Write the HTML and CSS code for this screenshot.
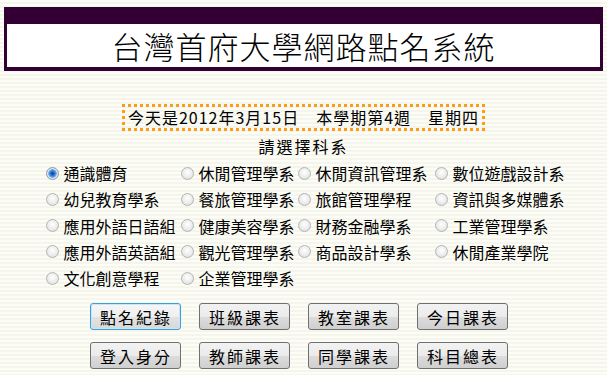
FILE: index.html
```html
<!DOCTYPE html>
<html lang="zh-Hant">
<head>
  <meta charset="UTF-8" />
  <title>台灣首府大學網路點名系統</title>
  <link rel="stylesheet" href="styles.css">
</head>
<body>

  <div class="header">
    <h1>台灣首府大學網路點名系統</h1>
  </div>

  <div class="today">
    <span class="today-box">今天是2012年3月15日　本學期第4週　星期四</span>
  </div>

  <p class="prompt">請選擇科系</p>

  <form class="depts">
    <label><input type="radio" name="dept" checked>通識體育</label>
    <label><input type="radio" name="dept">休閒管理學系</label>
    <label><input type="radio" name="dept">休閒資訊管理系</label>
    <label><input type="radio" name="dept">數位遊戲設計系</label>

    <label><input type="radio" name="dept">幼兒教育學系</label>
    <label><input type="radio" name="dept">餐旅管理學系</label>
    <label><input type="radio" name="dept">旅館管理學程</label>
    <label><input type="radio" name="dept">資訊與多媒體系</label>

    <label><input type="radio" name="dept">應用外語日語組</label>
    <label><input type="radio" name="dept">健康美容學系</label>
    <label><input type="radio" name="dept">財務金融學系</label>
    <label><input type="radio" name="dept">工業管理學系</label>

    <label><input type="radio" name="dept">應用外語英語組</label>
    <label><input type="radio" name="dept">觀光管理學系</label>
    <label><input type="radio" name="dept">商品設計學系</label>
    <label><input type="radio" name="dept">休閒產業學院</label>

    <label><input type="radio" name="dept">文化創意學程</label>
    <label><input type="radio" name="dept">企業管理學系</label>
  </form>

  <div class="buttons">
    <button class="default">點名紀錄</button>
    <button>班級課表</button>
    <button>教室課表</button>
    <button>今日課表</button>
    <button>登入身分</button>
    <button>教師課表</button>
    <button>同學課表</button>
    <button>科目總表</button>
  </div>

</body>
</html>
```

FILE: styles.css
```css
body {
  margin: 7px 4px;
  font-family: "Noto Sans CJK TC", "Noto Sans", sans-serif;
  font-size: 16px;
  color: #000;
  background-color: #fbfbf4;
  background-image: repeating-linear-gradient(to bottom, #fdfdf8 0, #fdfdf8 2px, #f5f5eb 2px, #f5f5eb 4px);
}

.header {
  background-color: #fff;
  border: 3px solid #330033;
  border-top-width: 17px;
  border-bottom-width: 4px;
  height: 43px;
}

.header h1 {
  margin: 0;
  font-size: 31px;
  font-weight: 300;
  line-height: 43px;
  text-align: center;
  letter-spacing: 1px;
}

.today {
  margin-top: 33px;
  text-align: center;
}

.today-box {
  display: inline-block;
  border: 3px dotted #ff9a1a;
  padding: 0 3px;
  height: 21px;
  line-height: 21px;
  letter-spacing: 1px;
}

.prompt {
  margin: 4px 0 0;
  line-height: 22px;
  text-align: center;
  letter-spacing: 2px;
}

.depts {
  display: grid;
  grid-template-columns: 135px 117px 137px 133px;
  grid-auto-rows: 26.25px;
  width: 522px;
  margin: 3px auto 0;
}

.depts label {
  display: flex;
  align-items: center;
  white-space: nowrap;
}

.depts input {
  appearance: none;
  flex: none;
  width: 13px;
  height: 13px;
  margin: 0 5px 0 3px;
  border: 1px solid #b4b4b4;
  border-radius: 50%;
  background: radial-gradient(circle at 50% 40%, #ffffff 0, #ececec 55%, #d6d6d6 100%);
}

.depts input:checked {
  border-color: #8a9bb0;
  background: radial-gradient(circle, #0b3f86 0, #2a6fcf 2px, #69b3f0 4px, #e6e6e6 4.6px, #d9d9d9 100%);
}

.buttons {
  display: grid;
  grid-template-columns: repeat(4, 91px);
  grid-auto-rows: 27px;
  column-gap: 18px;
  row-gap: 12px;
  justify-content: center;
  margin-top: 12px;
  padding-right: 10px;
}

.buttons button {
  font-family: inherit;
  font-size: 16px;
  letter-spacing: 2px;
  padding: 0 0 0 2px;
  color: #000;
  border: 1px solid #707070;
  border-radius: 3px;
  background: linear-gradient(to bottom, #f2f2f2 0, #ebebeb 50%, #dddddd 50%, #cfcfcf 100%);
  cursor: pointer;
}

.buttons button.default {
  border-color: #3c9fd8;
  box-shadow: inset 0 0 0 1px #c8e8fa;
  background: linear-gradient(to bottom, #f6f6f6 0, #efefef 50%, #e3e3e3 50%, #d8d8d8 100%);
}

.buttons button:hover {
  background: linear-gradient(to bottom, #eaf6fd 0, #d9f0fc 50%, #bee6fd 50%, #a7d9f5 100%);
}
```
